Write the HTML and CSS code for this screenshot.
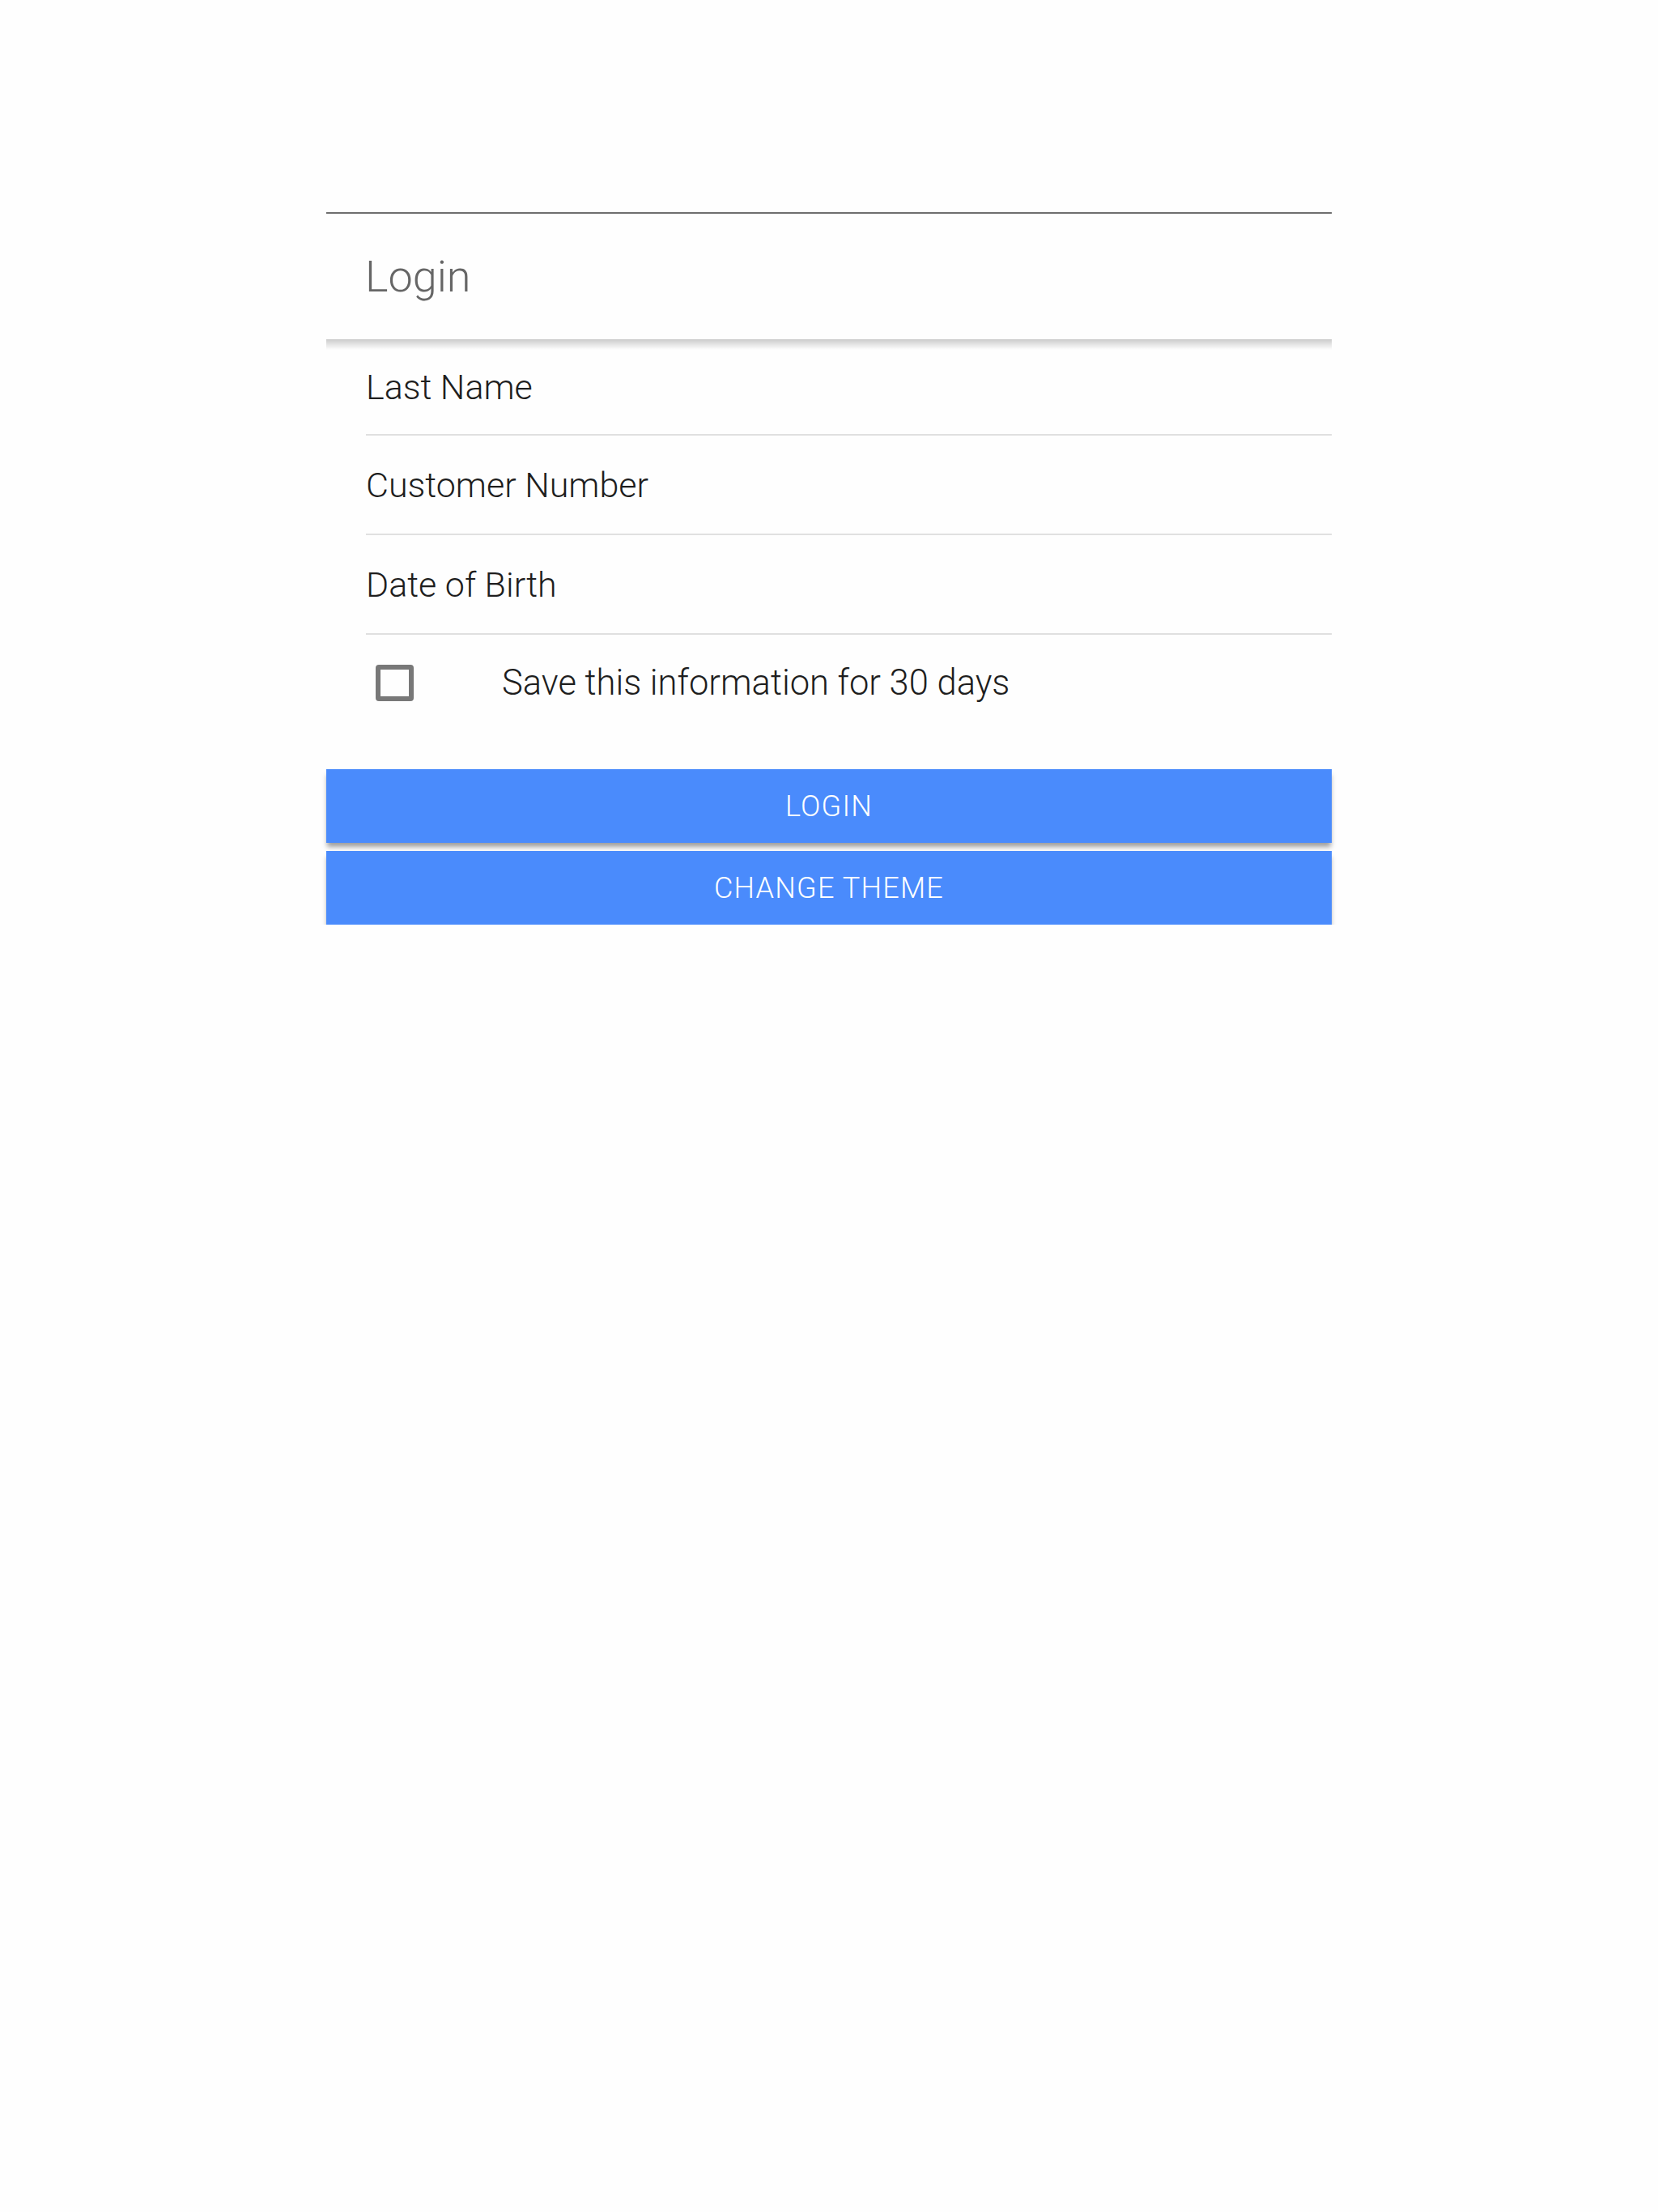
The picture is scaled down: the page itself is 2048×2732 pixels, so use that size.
FILE: index.html
```html
<!DOCTYPE html>
<html lang="en">
  <head>
    <meta charset="UTF-8">
    <title>Login</title>
    <link rel="stylesheet" href="styles.css">
  </head>
  <body>
    <div class="container">
      <div class="header">Login</div>
      <div class="field first">Last Name</div>
      <div class="field">Customer Number</div>
      <div class="field">Date of Birth</div>
      <label class="remember">
        <span class="box"></span>
        <span class="remember-text">Save this information for 30 days</span>
      </label>
      <button class="btn">LOGIN</button>
      <button class="btn">CHANGE THEME</button>
    </div>
  </body>
</html>
```

FILE: styles.css
```css
body {
  font-family: Roboto, "Liberation Sans", sans-serif;
  font-weight: 300;
  margin: 0;
  padding: 0;
  background-color: #fefefe;
}

.container {
  width: 1242px;
  margin: 0 auto;
  padding-top: 262px;
}

.header {
  height: 155px;
  border-top: 2px solid #6e6e6e;
  padding-left: 48px;
  display: flex;
  align-items: center;
  font-size: 54px;
  color: #666;
  position: relative;
}

/* shadow bar under the title */
.header::after {
  content: "";
  position: absolute;
  left: 0;
  right: 0;
  top: 100%;
  height: 13px;
  background: linear-gradient(rgba(0, 0, 0, 0.2), rgba(0, 0, 0, 0));
}

.field {
  margin-left: 49px;
  height: 121px;
  border-bottom: 2px solid #e0e0e0;
  display: flex;
  align-items: center;
  font-size: 43px;
  color: #1e1e1e;
}

.field.first {
  height: 117px;
}

.remember {
  margin-left: 49px;
  height: 119px;
  display: flex;
  align-items: center;
  font-size: 43.5px;
  color: #1e1e1e;
}

.box {
  width: 35px;
  height: 33px;
  margin-left: 12px;
  border: 6px solid #787878;
  border-radius: 4px;
  flex-shrink: 0;
}

.remember-text {
  margin-left: 109px;
}

.btn {
  display: block;
  width: 100%;
  height: 91px;
  margin-top: 10px;
  border: none;
  background-color: #4a8bfc;
  color: #fff;
  font-family: Roboto, "Liberation Sans", sans-serif;
  font-weight: 300;
  font-size: 36px;
  letter-spacing: 1.2px;
  box-shadow: 0 6px 6px -1px rgba(0, 0, 0, 0.38);
  cursor: pointer;
}

.remember + .btn {
  margin-top: 47px;
}
```
